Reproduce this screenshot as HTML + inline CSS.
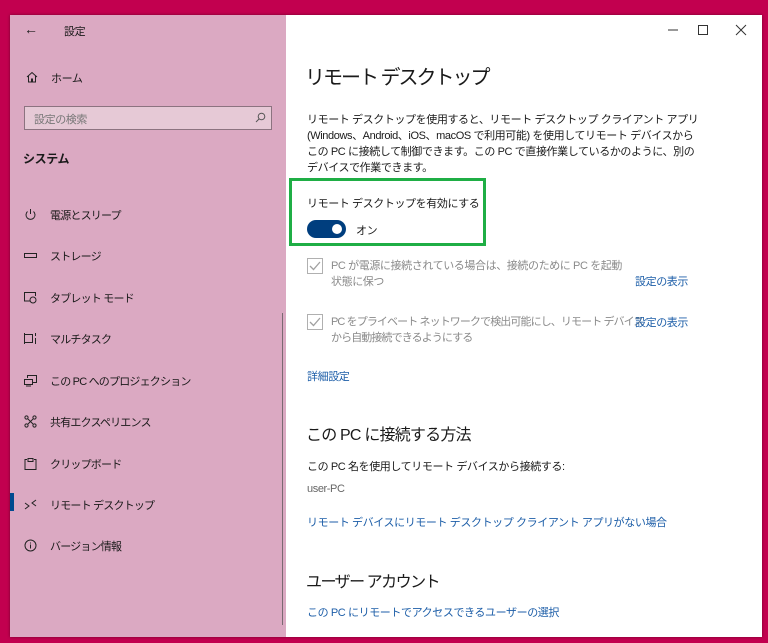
<!DOCTYPE html>
<html><head><meta charset="utf-8"><style>
*{margin:0;padding:0;box-sizing:border-box}
body{width:768px;height:643px;background:#c2004f;position:relative;overflow:hidden;font-family:"Liberation Sans","Noto Sans CJK JP",sans-serif;color:#1a1a1a}
.win{position:absolute;left:10px;top:15px;width:752px;height:622px;background:#fff;box-shadow:0 0 3px rgba(0,0,0,.4)}
.side{position:absolute;left:0;top:0;width:276px;height:622px;background:#dba9c2}
.t{position:absolute;white-space:nowrap;font-size:11px;letter-spacing:-0.4px}
.nav{position:absolute;left:14px;font-size:11px;letter-spacing:-0.8px;color:#1a1a1a;white-space:nowrap}
.nav svg{position:absolute;left:0;top:0}
.nav span{position:absolute;left:26px;top:-1px}
.link{color:#1d5ea8}
.gray{color:#8a8a8a}
.cb{position:absolute;width:16px;height:16px;border:1.5px solid #b0b0b0}
</style></head><body>
<div class="win">
<div class="side">
 <div class="t" style="left:14px;top:6px;font-size:14px">←</div>
 <div class="t" style="left:54px;top:8px;font-size:11px">設定</div>
 <svg style="position:absolute;left:16px;top:56px" width="12" height="12" viewBox="0 0 12 12"><path d="M1 6L6 1.5L11 6M2.5 5v6h3V8h1v3h3V5" fill="none" stroke="#222" stroke-width="1"/></svg>
 <div class="t" style="left:41px;top:55px">ホーム</div>
 <div style="position:absolute;left:14px;top:91px;width:248px;height:24px;border:1px solid #8c7380;background:#e6c9d6"></div>
 <div class="t" style="left:24px;top:96px;color:#777">設定の検索</div>
 <svg style="position:absolute;left:245px;top:97px" width="11" height="11" viewBox="0 0 11 11"><circle cx="6.5" cy="4.5" r="3.3" fill="none" stroke="#555"/><path d="M4 7L1 10" stroke="#555"/></svg>
 <div class="t" style="left:13px;top:135px;font-weight:bold;font-size:12px">システム</div>
 <div class="nav" style="top:193px"><svg width="13" height="13" viewBox="0 0 13 13"><path d="M3.5 3.5a4.5 4.5 0 1 0 6 0M6.5 1v5" fill="none" stroke="#222"/></svg><span>電源とスリープ</span></div>
 <div class="nav" style="top:234px"><svg width="13" height="13" viewBox="0 0 13 13"><rect x="0.5" y="4.5" width="12" height="4" fill="none" stroke="#222"/></svg><span>ストレージ</span></div>
 <div class="nav" style="top:276px"><svg width="13" height="13" viewBox="0 0 13 13"><path d="M6 10H.5V1.5h11V5" fill="none" stroke="#222"/><circle cx="9" cy="9" r="3" fill="none" stroke="#222"/></svg><span>タブレット モード</span></div>
 <div class="nav" style="top:317px"><svg width="13" height="13" viewBox="0 0 13 13"><path d="M.5 1v11M.5 2.5h8v8h-8M11.5 1v3M11.5 6v6" fill="none" stroke="#222"/></svg><span>マルチタスク</span></div>
 <div class="nav" style="top:359px"><svg width="13" height="13" viewBox="0 0 13 13"><path d="M3.5 4V1.5h9v7H9M.5 5.5h8v5h-8zM2 12h5" fill="none" stroke="#222"/></svg><span>この PC へのプロジェクション</span></div>
 <div class="nav" style="top:400px"><svg width="13" height="13" viewBox="0 0 13 13"><circle cx="2.5" cy="2.5" r="1.6" fill="none" stroke="#222"/><circle cx="10.5" cy="2.5" r="1.6" fill="none" stroke="#222"/><circle cx="2.5" cy="10.5" r="1.6" fill="none" stroke="#222"/><circle cx="10.5" cy="10.5" r="1.6" fill="none" stroke="#222"/><path d="M4 4l5 5M9 4L4 9" stroke="#222"/></svg><span>共有エクスペリエンス</span></div>
 <div class="nav" style="top:442px"><svg width="13" height="13" viewBox="0 0 13 13"><path d="M3 2.5H1v10h11v-10H10M4 1.5h5v3H4z" fill="none" stroke="#222"/></svg><span>クリップボード</span></div>
 <div style="position:absolute;left:0;top:478px;width:4px;height:18px;background:#004a8f"></div>
 <div class="nav" style="top:483px"><svg width="13" height="13" viewBox="0 0 13 13"><path d="M1 5l4 3-4 3M12 2L8 5l4 3" fill="none" stroke="#222"/></svg><span>リモート デスクトップ</span></div>
 <div class="nav" style="top:524px"><svg width="13" height="13" viewBox="0 0 13 13"><circle cx="6.5" cy="6.5" r="5.5" fill="none" stroke="#222"/><path d="M6.5 5.5v4M6.5 3.5v1" stroke="#222"/></svg><span>バージョン情報</span></div>
 <div style="position:absolute;left:272px;top:298px;width:1px;height:312px;background:#7a6a72"></div>
</div>
<svg style="position:absolute;left:658px;top:9px" width="80" height="12" viewBox="0 0 80 12"><path d="M0 6h10" stroke="#333"/><rect x="30.5" y="1.5" width="9" height="9" fill="none" stroke="#333"/><path d="M68 1l10 10M78 1L68 11" stroke="#333"/></svg>
<div class="t" style="left:295px;top:46px;font-size:20px;letter-spacing:-2px">リモート デスクトップ</div>
<div class="t" style="left:297px;top:97px;line-height:16px">リモート デスクトップを使用すると、リモート デスクトップ クライアント アプリ<br>(Windows、Android、iOS、macOS で利用可能) を使用してリモート デバイスから<br>この PC に接続して制御できます。この PC で直接作業しているかのように、別の<br>デバイスで作業できます。</div>
<div style="position:absolute;left:279px;top:163px;width:197px;height:68px;border:3px solid #1fae45"></div>
<div class="t" style="left:297px;top:180px">リモート デスクトップを有効にする</div>
<div style="position:absolute;left:297px;top:205px;width:39px;height:18px;border-radius:9px;background:#003e7e"></div>
<div style="position:absolute;left:322px;top:209px;width:10px;height:10px;border-radius:5px;background:#fff"></div>
<div class="t" style="left:346px;top:207px">オン</div>
<div class="cb" style="left:297px;top:243px"></div>
<svg style="position:absolute;left:299px;top:245px" width="12" height="12"><path d="M1 6l3.5 3.5L11 2" fill="none" stroke="#a0a0a0" stroke-width="1.3"/></svg>
<div class="t gray" style="left:321px;top:243px;line-height:16px">PC が電源に接続されている場合は、接続のために PC を起動<br>状態に保つ</div>
<div class="t link" style="left:625px;top:258px">設定の表示</div>
<div class="cb" style="left:297px;top:299px"></div>
<svg style="position:absolute;left:299px;top:301px" width="12" height="12"><path d="M1 6l3.5 3.5L11 2" fill="none" stroke="#a0a0a0" stroke-width="1.3"/></svg>
<div class="t gray" style="left:321px;top:299px;line-height:16px;letter-spacing:-0.9px">PC をプライベート ネットワークで検出可能にし、リモート デバイス<br>から自動接続できるようにする</div>
<div class="t link" style="left:625px;top:299px">設定の表示</div>
<div class="t link" style="left:297px;top:353px">詳細設定</div>
<div class="t" style="left:296px;top:406px;font-size:16px;letter-spacing:-0.8px">この PC に接続する方法</div>
<div class="t" style="left:297px;top:443px">この PC 名を使用してリモート デバイスから接続する:</div>
<div class="t gray" style="left:297px;top:468px;color:#666">user-PC</div>
<div class="t link" style="left:297px;top:499px">リモート デバイスにリモート デスクトップ クライアント アプリがない場合</div>
<div class="t" style="left:296px;top:553px;font-size:16px;letter-spacing:-1.5px">ユーザー アカウント</div>
<div class="t link" style="left:297px;top:589px">この PC にリモートでアクセスできるユーザーの選択</div>
</div>
</body></html>
